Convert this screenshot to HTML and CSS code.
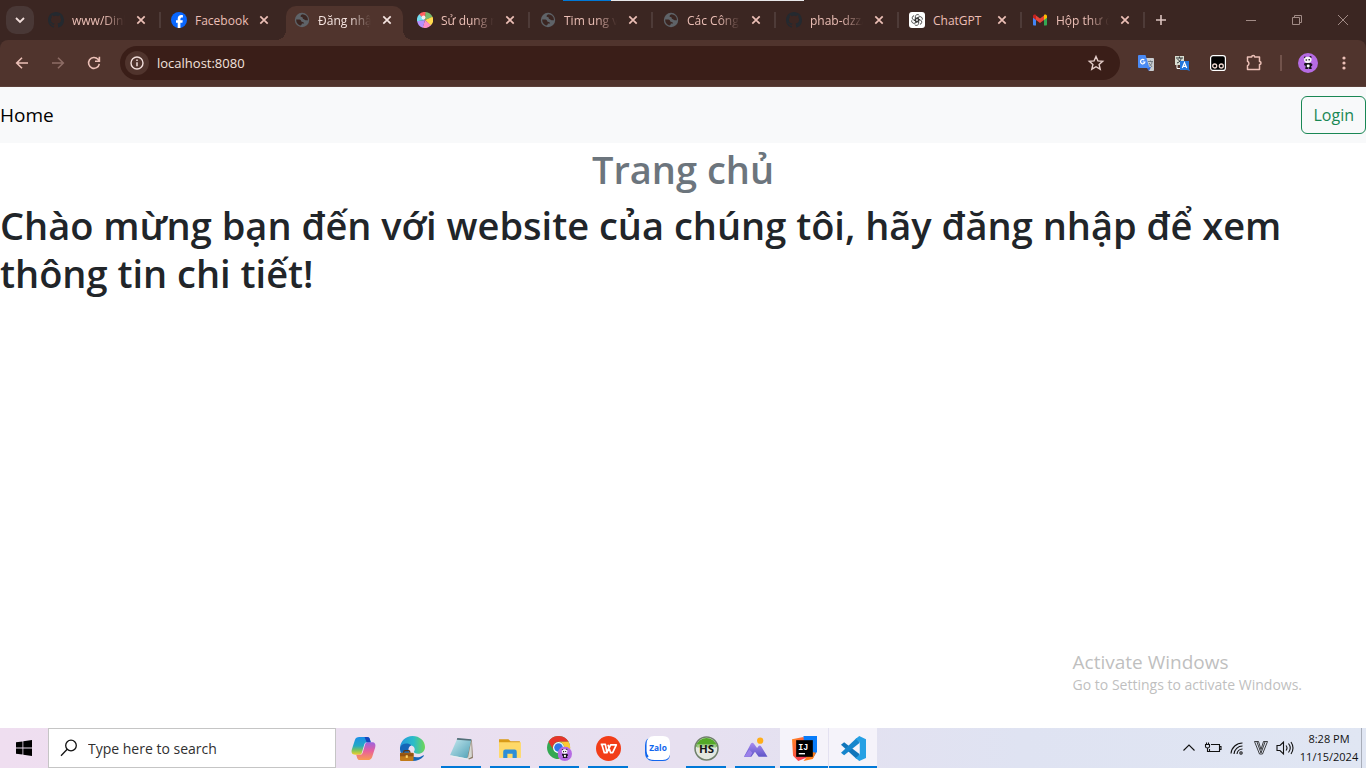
FILE: index.html
```html
<!DOCTYPE html>
<html lang="vi">
<head>
<meta charset="utf-8">
<meta name="viewport" content="width=device-width, initial-scale=1">
<title>Đăng nhập</title>
<link rel="stylesheet" href="styles.css">
</head>
<body>
<svg class="defs" aria-hidden="true">
  <defs>
    <linearGradient id="cop1" x1="0" y1="0" x2="0" y2="1"><stop offset="0" stop-color="#1b8fe8"/><stop offset=".5" stop-color="#24a9c4"/><stop offset=".75" stop-color="#7fc35a"/><stop offset="1" stop-color="#f2cf2b"/></linearGradient>
    <linearGradient id="cop2" x1="0" y1="0" x2="0" y2="1"><stop offset="0" stop-color="#9a63e0"/><stop offset=".5" stop-color="#e8609b"/><stop offset="1" stop-color="#f99a52"/></linearGradient>
    <linearGradient id="edge1" x1="0" y1="0" x2="1" y2="0"><stop offset="0" stop-color="#2398dd"/><stop offset=".55" stop-color="#2cbcc8"/><stop offset="1" stop-color="#6fd655"/></linearGradient>
    <linearGradient id="mtn" x1="0" y1="0" x2="0" y2="1"><stop offset="0" stop-color="#a78af0"/><stop offset="1" stop-color="#5e55c7"/></linearGradient>
    <linearGradient id="note" x1="0" y1="0" x2="1" y2="1"><stop offset="0" stop-color="#c7eaf0"/><stop offset="1" stop-color="#4e9fb5"/></linearGradient>
    <linearGradient id="ijbg" x1="0" y1="0" x2="1" y2="1"><stop offset="0" stop-color="#ff8a1f"/><stop offset="1" stop-color="#fb1f68"/></linearGradient>
  </defs>
  <symbol id="close" viewBox="0 0 16 16"><path d="M4.300 4.300l7.400 7.400M11.700 4.300l-7.400 7.400" fill="none" stroke="currentColor" stroke-width="1.700"/></symbol>
  <symbol id="github" viewBox="0 0 16 16"><path fill="#24292f" d="M8 0C3.58 0 0 3.58 0 8c0 3.54 2.29 6.53 5.47 7.59.4.07.55-.17.55-.38 0-.19-.01-.82-.01-1.49-2.01.37-2.53-.49-2.69-.94-.09-.23-.48-.94-.82-1.13-.28-.15-.68-.52-.01-.53.63-.01 1.08.58 1.23.82.72 1.21 1.87.87 2.33.66.07-.52.28-.87.51-1.07-1.78-.2-3.64-.89-3.64-3.95 0-.87.31-1.59.82-2.15-.08-.2-.36-1.02.08-2.12 0 0 .67-.21 2.2.82.64-.18 1.32-.27 2-.27s1.36.09 2 .27c1.53-1.04 2.2-.82 2.2-.82.44 1.1.16 1.92.08 2.12.51.56.82 1.27.82 2.15 0 3.07-1.87 3.75-3.65 3.95.29.25.54.73.54 1.48 0 1.07-.01 1.93-.01 2.2 0 .21.15.46.55.38A8.01 8.01 0 0 0 16 8c0-4.42-3.58-8-8-8z"/></symbol>
  <symbol id="globe" viewBox="0 0 16 16"><circle cx="8" cy="8" r="7.200" fill="#5f6368"/><path d="M8.500 2.200q-2 .4-2 2 0 .8 1.200.8 1 0 1 1.200.2 1 1.400 1 .6 1 1.700 1h2.200q0-3-2-4.600-1.500-1.300-3.500-1.400zM2.100 7.600h3.400q1.500 0 1.700 1.600.2.800 1.500.8 1.400.2 1.400 1.500h-1.800q-.6 0-.8 1.200-.2.700-1.500.8-3.700-1.300-3.900-5.900z" fill="#3b2622"/></symbol>
  <symbol id="panda" viewBox="0 0 20 20"><circle cx="10" cy="10" r="10" fill="#b66be3"/><path d="M6.500 10h6.500l1.500 1.500-.5 1.500-1 .2.800 2.800h-2.600l-.7-1-.7 1H7.200l.5-3-1.700-1z" fill="#17131b"/><rect x="8.700" y="11.500" width="3" height="3" rx="1.400" fill="#fff"/><circle cx="7" cy="4.500" r="1.100" fill="#17131b"/><circle cx="12.500" cy="4.200" r="1.100" fill="#17131b"/><ellipse cx="9.800" cy="6.800" rx="3.800" ry="3.100" fill="#f8f5f8"/><ellipse cx="8.300" cy="7" rx=".9" ry=".8" fill="#17131b"/><ellipse cx="11.200" cy="6.800" rx=".9" ry=".8" fill="#17131b"/></symbol>
</svg>

<header class="browser">
  <div class="tabstrip">
    <button class="tab-search" aria-label="Search tabs"><svg width="12" height="12" viewBox="0 0 12 12"><path d="M2 4l4 4 4-4" fill="none" stroke="#f1dedb" stroke-width="1.800"/></svg></button>
    <div class="tabs">
      <div class="tab"><svg class="favicon"><use href="#github"/></svg><span class="tab-title">www/Dinh</span><button class="close" aria-label="Close tab"><svg><use href="#close"/></svg></button></div>
      <div class="tab"><svg class="favicon" viewBox="0 0 16 16"><circle cx="8" cy="8" r="8" fill="#0866ff"/><path d="M6.700 16v-5.300H5V8.200h1.700V7.100c0-2.700 1.200-4 3.900-4 .5 0 1 .1 1.300.2v2.200h-.8c-1.200 0-1.700.5-1.700 1.700v1h2.400l-.4 2.500h-2V16z" fill="#fff"/></svg><span class="tab-title whole">Facebook</span><button class="close" aria-label="Close tab"><svg><use href="#close"/></svg></button></div>
      <div class="tab active"><svg class="favicon"><use href="#globe"/></svg><span class="tab-title">Đăng nhậ</span><button class="close" aria-label="Close tab"><svg><use href="#close"/></svg></button></div>
      <div class="tab"><svg class="favicon" viewBox="0 0 16 16"><path d="M8 8L2 2.500A8 8 0 0 1 9 0z" fill="#ff6161"/><path d="M8 8L8.500 0a8 8 0 0 1 7 5z" fill="#77b96d"/><path d="M8 8l7.500-3.300a8 8 0 0 1-1.800 8.900z" fill="#ffd94e"/><path d="M8 8l6 5.300a8 8 0 0 1-8.400 2.300z" fill="#ff8fc4"/><path d="M8 8l-2.200 7.700A8 8 0 0 1 .1 9z" fill="#b690ff"/><path d="M8 8L0 9.300a8 8 0 0 1 2.200-7z" fill="#72dcf0"/><circle cx="6.500" cy="5.500" r="2" fill="#fff" opacity=".85"/></svg><span class="tab-title">Sử dụng n</span><button class="close" aria-label="Close tab"><svg><use href="#close"/></svg></button></div>
      <div class="tab"><svg class="favicon"><use href="#globe"/></svg><span class="tab-title">Tim ung v</span><button class="close" aria-label="Close tab"><svg><use href="#close"/></svg></button></div>
      <div class="tab"><svg class="favicon"><use href="#globe"/></svg><span class="tab-title">Các Công</span><button class="close" aria-label="Close tab"><svg><use href="#close"/></svg></button></div>
      <div class="tab"><svg class="favicon"><use href="#github"/></svg><span class="tab-title">phab-dzz/</span><button class="close" aria-label="Close tab"><svg><use href="#close"/></svg></button></div>
      <div class="tab"><svg class="favicon" viewBox="0 0 16 16"><rect width="16" height="16" rx="3" fill="#fff"/><g fill="none" stroke="#333" stroke-width=".8"><g id="petal"><path d="M6.300 9V4.800a2.300 2.300 0 0 1 4-1.500M6.300 5.500l3.500 2"/></g><use href="#petal" transform="rotate(60 8 8)"/><use href="#petal" transform="rotate(120 8 8)"/><use href="#petal" transform="rotate(180 8 8)"/><use href="#petal" transform="rotate(240 8 8)"/><use href="#petal" transform="rotate(300 8 8)"/></g></svg><span class="tab-title whole">ChatGPT</span><button class="close" aria-label="Close tab"><svg><use href="#close"/></svg></button></div>
      <div class="tab"><svg class="favicon" viewBox="0 0 16 16"><path d="M1 4v8.500c0 .5.500 1 1 1h2V7z" fill="#4285f4"/><path d="M12 7v6.500h2c.6 0 1-.5 1-1V4z" fill="#34a853"/><path d="M4 3.500l4 3 4-3V8l-4 3-4-3z" fill="#ea4335"/><path d="M1 4.300C1 2.600 2.800 2 4 3v5L1 5.800z" fill="#c5221f"/><path d="M15 4.300C15 2.600 13.200 2 12 3v5l3-2.200z" fill="#fbbc04"/></svg><span class="tab-title">Hộp thư đ</span><button class="close" aria-label="Close tab"><svg><use href="#close"/></svg></button></div>
    </div>
    <button class="new-tab" aria-label="New tab"><svg width="12" height="12" viewBox="0 0 12 12"><path d="M6 1v10M1 6h10" stroke="#dcc4c0" stroke-width="1.600"/></svg></button>
    <div class="window-controls">
      <button aria-label="Minimize"><svg width="12" height="12" viewBox="0 0 12 12"><path d="M1 6.500h10"/></svg></button>
      <button aria-label="Restore"><svg width="12" height="12" viewBox="0 0 12 12"><path d="M1.500 3.500h7v7h-7zM3.500 3.500v-2h7v7h-2"/></svg></button>
      <button aria-label="Close window"><svg width="12" height="12" viewBox="0 0 12 12"><path d="M1 1l10 10M11 1L1 11"/></svg></button>
    </div>
    <div class="share-strip"></div>
  </div>
  <div class="toolbar">
    <nav class="history">
      <button aria-label="Back"><svg width="16" height="16" viewBox="0 0 16 16"><path d="M14 8H3M8 2.700L2.700 8 8 13.300" fill="none" stroke="#ecc0b7" stroke-width="1.600"/></svg></button>
      <button aria-label="Forward"><svg width="16" height="16" viewBox="0 0 16 16"><path d="M2 8h11M8 2.700L13.300 8 8 13.300" fill="none" stroke="#8d6c65" stroke-width="1.600"/></svg></button>
      <button aria-label="Reload"><svg width="16" height="16" viewBox="0 0 16 16"><path d="M13.300 8.800A5.400 5.400 0 1 1 12 4.300l1 1.100M13.400 1.800v4.400H9" fill="none" stroke="#ecc0b7" stroke-width="1.600"/></svg></button>
    </nav>
    <div class="omnibox">
      <button class="site-info" aria-label="Site information"><svg width="14" height="14" viewBox="0 0 14 14"><circle cx="7" cy="7" r="6" fill="none" stroke="#f1dedb" stroke-width="1.400"/><path d="M7 6.300v4M7 3.500v1.500" stroke="#f1dedb" stroke-width="1.500"/></svg></button>
      <input class="address" type="text" value="localhost:8080" aria-label="Address">
      <button class="bookmark" aria-label="Bookmark"><svg width="18" height="18" viewBox="0 0 18 18"><path d="M9 2.500l1.900 4.400 4.800.4-3.600 3.200 1.100 4.700L9 12.700l-4.200 2.500 1.100-4.700-3.600-3.200 4.800-.4z" fill="none" stroke="#e5ceca" stroke-width="1.400"/></svg></button>
    </div>
    <div class="extensions">
      <button aria-label="Google Translate"><svg width="16" height="16" viewBox="0 0 16 16"><path d="M6 3h9q1 0 1 1v11q0 1-1 1h-4z" fill="#c9cdd0"/><path d="M8 12h5l-2 4z" fill="#3367d6"/><path d="M1 0h6.500L11.500 13H1q-1 0-1-1V1q0-1 1-1z" fill="#4a8af4"/><path d="M6.300 5.100A2.200 2.200 0 1 0 6.900 7H4.700" fill="none" stroke="#fff" stroke-width="1.200"/><path d="M10 6.500h5M12.500 5.500v1M11 8l3 4M14 7c0 2-1.500 3-2.500 4" fill="none" stroke="#68727a" stroke-width=".9"/></svg></button>
      <button aria-label="Translator"><svg width="16" height="16" viewBox="0 0 16 16"><path d="M1 1h9v9H1z" fill="#d9ded2"/><path d="M2 3h7M5.500 1.500V3M3 8c3-1 4-3 4-5M3.500 4l4 4" stroke="#33383b" fill="none"/><path d="M3 10v3.500h3" stroke="#fff" fill="none"/><path d="M6 6h9v8l1 2-3-1H6z" fill="#2477dc"/><path d="M8.300 13L10.500 7.500l2.200 5.500M9 11.300h3" stroke="#fff" stroke-width="1.200" fill="none"/></svg></button>
      <button aria-label="Tampermonkey"><svg width="16" height="16" viewBox="0 0 16 16"><rect x=".6" y=".6" width="14.800" height="14.800" rx="2.500" fill="#000" stroke="#fff" stroke-width="1.200"/><circle cx="4.700" cy="11" r="2" fill="#000" stroke="#eed6ce" stroke-width="1.300"/><circle cx="11.300" cy="11" r="2" fill="#000" stroke="#eed6ce" stroke-width="1.300"/></svg></button>
      <button aria-label="Extensions"><svg width="18" height="18" viewBox="0 0 18 18"><path d="M2.500 3h4.200a1.500 1.500 0 0 1 3 0H14.500v4.500a1.500 1.500 0 0 1 0 3V15.500H2.500v-3.800a2.400 2.400 0 0 0 0-4.400z" fill="none" stroke="#ecc0b7" stroke-width="1.500" stroke-linejoin="round"/></svg></button>
      <span class="divider"></span>
      <button aria-label="Profile"><svg width="20" height="20"><use href="#panda"/></svg></button>
      <button aria-label="Menu"><svg width="16" height="16" viewBox="0 0 16 16" fill="#ecc0b7"><circle cx="8" cy="3" r="1.600"/><circle cx="8" cy="8" r="1.600"/><circle cx="8" cy="13" r="1.600"/></svg></button>
    </div>
  </div>
</header>

<main class="page">
  <nav class="navbar">
    <a class="brand" href="#">Home</a>
    <button class="login">Login</button>
  </nav>
  <h1 class="title">Trang chủ</h1>
  <h1 class="welcome">Chào mừng bạn đến với website của chúng tôi, hãy đăng nhập để xem thông tin chi tiết!</h1>
  <aside class="watermark">
    <p class="watermark-title">Activate Windows</p>
    <p class="watermark-text">Go to Settings to activate Windows.</p>
  </aside>
</main>

<footer class="taskbar">
  <button class="start" aria-label="Start"><svg width="16" height="16" viewBox="0 0 16 16"><path d="M0 2.300l6.500-.9v6.200H0zM7.300 1.300L16 0v7.600H7.300zM0 8.400h6.500v6.200L0 13.700zM7.300 8.400H16V16l-8.700-1.200z"/></svg></button>
  <label class="search">
    <svg width="18" height="18" viewBox="0 0 18 18"><circle cx="11" cy="6.500" r="5.300" fill="none" stroke="#111" stroke-width="1.300"/><path d="M7.200 10.300L1 16.700" stroke="#111" stroke-width="1.300"/></svg>
    <input type="text" placeholder="Type here to search" aria-label="Search">
  </label>
  <div class="apps">
    <button class="app" aria-label="Copilot"><svg viewBox="0 0 24 24"><path d="M8 1h7.500c1.500 0 2.200.8 2.600 2L19 6h-3.500c-1.500 0-2.300.8-2.700 2l-2.400 8c-.4 1.300-1 2-2.400 2H4c-3 0-4-2-3.200-5L3.600 4.200C4.300 2 5.800 1 8 1z" fill="url(#cop1)"/><path d="M16 23H8.500C7 23 6.300 22.200 5.900 21L5 18h3.500c1.500 0 2.300-.8 2.700-2l2.400-8c.4-1.300 1-2 2.400-2h4c3 0 4 2 3.200 5l-2.800 8.800C19.700 22 18.200 23 16 23z" fill="url(#cop2)"/><path d="M13 1h2.500c1.500 0 2.200.8 2.600 2L19 6h-4z" fill="#1746bd"/></svg></button>
    <button class="app" aria-label="Edge"><svg viewBox="0 0 24 24"><path d="M0 11C.6 4.800 5.400 0 12 0c7 0 12 4.800 12 10.500 0 4-3 6.500-6.600 6.500-2.800 0-4.400-1.200-4-2.200 1.600-2 .6-4.800-2.400-5.800C7.500 7.600 3 8.200 0 11z" fill="url(#edge1)"/><path d="M0 11c1.500-3.800 7.500-5 11-2-2.800.8-3.500 3.800-2.300 6.500 1.600 3.600 5.400 5.500 9.200 4.800 1.800-.3 3-1 4.100-1.700.8-.5 1.200 0 .7.800C20.500 22.400 16.600 24 12 24 5 24-.6 18 0 11z" fill="#1466b8"/><path d="M3.500 16.500v-1q0-1.500 1.500-1.500h3q1.500 0 1.500 1.500v1" fill="none" stroke="#583314" stroke-width="1.200"/><rect x="0" y="16" width="13" height="8" rx="1" fill="#c17a18"/><path d="M0 16.500h13v3H0z" fill="#925310"/><rect x="5.500" y="18.500" width="2" height="2.500" fill="#ffd36a"/></svg></button>
    <button class="app open" aria-label="Notepad"><svg viewBox="0 0 24 24"><path d="M8 2.500L22 4l1 17-4 1.500z" fill="#8a7963"/><path d="M8 2.500L21.500 3 17.500 21.500 1 18.500z" fill="url(#note)"/><path d="M1 18.500l16.500 3L19 23 2 20z" fill="#e8edf0"/><path d="M8 2l13.500 1-.3 1.500L7.500 3.700z" fill="#536e78"/><path d="M21.500 4L18 22l4-2z" fill="#d7d8d3"/></svg></button>
    <button class="app open" aria-label="File Explorer"><svg viewBox="0 0 24 24"><path d="M1 3h9l2 2h9v5H1z" fill="#d99b16"/><path d="M1 6h21v15H1z" fill="#ffd968"/><path d="M5 21v-6q0-2 2-2h9q2 0 2 2v6h-4v-4H9v4z" fill="#2e8ed8"/></svg></button>
    <button class="app open" aria-label="Chrome"><svg viewBox="0 0 26 26"><circle cx="12" cy="12" r="12" fill="#34a853"/><path d="M1.600 6A12 12 0 0 1 22.400 6H12a6 6 0 0 0-5.200 9z" fill="#e6352b"/><path d="M22.400 6A12 12 0 0 1 12 24l5.200-9A6 6 0 0 0 12 6z" fill="#fcc934"/><circle cx="12" cy="12" r="5.700" fill="#fff"/><circle cx="12" cy="12" r="4.500" fill="#3077e8"/><use href="#panda" x="11" y="11" width="15" height="15"/></svg></button>
    <button class="app open" aria-label="WPS Office"><svg viewBox="0 0 24 24"><circle cx="12" cy="12" r="12" fill="#f23d18"/><path d="M4.500 8H9l1.500 8L14 8.500h5.500L16 16h-2L11.500 8.500M5.500 8L8 16h2.500L13 10" fill="none" stroke="#fff" stroke-width="1.600" stroke-linejoin="round"/></svg></button>
    <button class="app" aria-label="Zalo"><svg viewBox="0 0 24 24"><path d="M7 1Q0 2 0 9v7q0 7 7 8h10q6 0 7-5L10 4z" fill="#1266ee"/><path d="M9 0h8q7 0 7 7v9q0 7-7 7H9q-3 0-5-1l-2-1 1.500-1.500q-2-2-2-5V8q0-8 7.500-8z" fill="#fff"/><text x="12.500" y="14" text-anchor="middle" class="zalo">Zalo</text></svg></button>
    <button class="app open" aria-label="HeidiSQL"><svg viewBox="0 0 24 24"><circle cx="12" cy="12" r="11" fill="#e3e8e0" stroke="#70806b" stroke-width="1.500"/><path d="M2 9.500a10.400 10.400 0 0 1 20 0l-1 1.500H3z" fill="#53a927"/><path d="M3 8h18v9H3z" fill="#e3e8e0" opacity=".55"/><text x="12" y="16" text-anchor="middle" class="heidi">HS</text></svg></button>
    <button class="app open" aria-label="Photo app"><svg viewBox="0 0 24 24"><path d="M1 20L7.500 7.500q1.500-2 3 0l3 4 1.500-2q1.500-1 2.800 1L23.500 20H15l-3.500-5L8 20z" fill="url(#mtn)"/><path d="M1 20l5-7 3 3-2 4z" fill="#9b80ea"/><circle cx="16.500" cy="4.500" r="3" fill="#ffae19"/></svg></button>
    <button class="app open current" aria-label="IntelliJ IDEA"><svg viewBox="0 0 24 24"><path d="M0 3l11-2 6 10-1 9-10 4-5-5z" fill="url(#ijbg)"/><path d="M11 0h13v15l-4 6-8-9z" fill="#087cfa"/><path d="M18 15l5 1-3 6-9 2z" fill="#fe7a18"/><path d="M4 4h16v16H4z"/><path d="M6.500 17h6" stroke="#fff" stroke-width="1.300"/><text x="6" y="13" class="idea">IJ</text></svg></button>
    <button class="app open current" aria-label="Visual Studio Code"><svg viewBox="0 0 24 24"><path d="M3 6L0 8.500 15 22l3-4.500z" fill="#1075ba"/><path d="M3 18.500L0 16 15 2l3 4.500z" fill="#1685cc"/><path d="M17.500 0L24 3v18l-6.500 3L14 21.200l4-3.200V6l-4-3.200z" fill="#26a0e4"/></svg></button>
  </div>
  <div class="tray">
    <button aria-label="Show hidden icons"><svg width="16" height="16" viewBox="0 0 16 16"><path d="M2.500 10.500L8 5l5.500 5.500"/></svg></button>
    <button aria-label="Battery"><svg width="18" height="16" viewBox="0 0 18 16"><path d="M7 4.500h8.500v7H5.500V9M15.500 6.500h1.500v3h-1.500M1.500 4.500h4v2q0 1.500-2 1.500t-2-1.500zM2.500 2.500v2M4.500 2.500v2M3.500 8v3.500h2"/></svg></button>
    <button aria-label="Network"><svg width="16" height="16" viewBox="0 0 16 16"><path d="M2 13.500A11.500 11.500 0 0 1 13.500 3M5 14a8.500 8.500 0 0 1 8.500-8M8 14a5.500 5.500 0 0 1 5.500-5"/><circle cx="12" cy="13" r="1.200"/></svg></button>
    <button aria-label="Vietnamese input"><svg width="16" height="16" viewBox="0 0 16 16"><path d="M1.500 1.500h4L8 9.500l2.500-8h4L9.500 14h-3zM4 2l4 11 4-11" stroke-width=".8"/></svg></button>
    <button aria-label="Volume"><svg width="18" height="16" viewBox="0 0 18 16"><path d="M1 5.500h3L7.500 2v12L4 10.500H1zM10 5.500q2 2.500 0 5M12.500 3.500q3.500 4.500 0 9M15 2q4 6 0 12"/></svg></button>
    <time class="clock" datetime="2024-11-15T20:28"><span>8:28 PM</span><span>11/15/2024</span></time>
    <span class="show-desktop"></span>
  </div>
</footer>
</body>
</html>
```
FILE: styles.css
```css
* { box-sizing: border-box; }

body {
  margin: 0;
  min-height: 100vh;
  display: flex;
  flex-direction: column;
  background: #fff;
  font-family: "Open Sans", "Noto Sans", sans-serif;
}

button {
  display: flex;
  align-items: center;
  justify-content: center;
  padding: 0;
  border: 0;
  background: none;
  font: inherit;
  color: inherit;
}

input {
  min-width: 0;
  padding: 0;
  border: 0;
  outline: 0;
  background: none;
  font: inherit;
  color: inherit;
}

.defs { position: absolute; width: 0; height: 0; }

/* Browser frame */
.browser { background: #3b2622; }

.tabstrip {
  position: relative;
  display: flex;
  height: 40px;
  padding: 6px 0 0 6px;
  color: #ecbfb6;
  font-size: 12px;
}

.tab-search {
  flex: none;
  width: 28px;
  height: 28px;
  margin-right: 6px;
  border-radius: 10px;
  background: #493836;
}

.tabs { display: flex; gap: 6px; }

.tab {
  position: relative;
  display: flex;
  align-items: center;
  gap: 8px;
  width: 117px;
  height: 34px;
  padding: 0 8px 6px;
}

.tab:not(.active)::after {
  content: "";
  position: absolute;
  right: -4px;
  top: 6px;
  width: 2px;
  height: 16px;
  background: #4e3b38;
}

.tab:has(+ .active)::after { display: none; }

.tab.active {
  background: #50342d;
  border-radius: 10px 10px 0 0;
  color: #f5e4e0;
}

.tab.active::before,
.tab.active::after {
  content: "";
  position: absolute;
  bottom: 0;
  width: 10px;
  height: 10px;
}

.tab.active::before { left: -10px; background: radial-gradient(circle at 0 0, transparent 10px, #50342d 10px); }
.tab.active::after { right: -10px; background: radial-gradient(circle at 100% 0, transparent 10px, #50342d 10px); }

.favicon { flex: none; width: 16px; height: 16px; }

.tab-title {
  flex: 1;
  min-width: 0;
  white-space: nowrap;
  mask-image: linear-gradient(to right, #000 60%, transparent);
}

.tab-title.whole { mask-image: none; }

.close { flex: none; width: 16px; height: 16px; }
.close svg { width: 16px; height: 16px; }

.new-tab { width: 28px; height: 28px; margin-left: 6px; }

.window-controls {
  display: flex;
  margin-left: auto;
  height: 28px;
}

.window-controls button { width: 46px; }
.window-controls svg { fill: none; stroke: #a18b86; }

.share-strip {
  position: absolute;
  left: 563px;
  top: 0;
  width: 241px;
  height: 1px;
  background: linear-gradient(to right, #0078d7 20%, #e8e8ea 20%);
}

.toolbar {
  display: flex;
  align-items: center;
  gap: 8px;
  padding: 6px 4px;
  border-bottom: 1px solid #5c4039;
  border-radius: 8px 8px 0 0;
  background: #50342d;
}

.history, .extensions { display: flex; align-items: center; }
.history button, .extensions button { width: 36px; height: 34px; }

.omnibox {
  flex: 1;
  display: flex;
  align-items: center;
  height: 34px;
  padding: 0 15px 0 5px;
  border-radius: 17px;
  background: #3a1e18;
  color: #f3e2de;
  font-size: 13px;
}

.site-info { width: 24px; height: 24px; border-radius: 12px; background: #50342d; }
.address { flex: 1; margin-left: 8px; }

.divider { width: 2px; height: 16px; margin: 0 8px; background: #72534b; }

/* Web page */
.page { position: relative; flex: 1; }

.navbar {
  display: flex;
  align-items: center;
  justify-content: space-between;
  height: 56px;
  background: #f8f9fa;
}

.brand { color: #000; font-size: 19px; text-decoration: none; }

.login {
  height: 38px;
  padding: 0 11px;
  border: 1px solid #198754;
  border-radius: 6px;
  color: #198754;
  font-size: 16px;
}

.title, .welcome {
  margin: 0 0 8px;
  color: #212529;
  font-size: 38px;
  font-weight: 600;
  line-height: 48px;
}

.title { padding-top: 2px; color: #6c757d; text-align: center; }

.watermark {
  position: absolute;
  right: 64px;
  bottom: 33px;
  color: #bfbfbf;
}

.watermark p { margin: 0; }
.watermark-title { font-size: 19px; line-height: 26px; }
.watermark-text { font-size: 14px; line-height: 20px; }

/* Taskbar */
.taskbar {
  display: flex;
  height: 40px;
  background: linear-gradient(to right, #efdef0, #e7e0f0 50%, #dfe3f2 75%, #e0e6f3);
}

.start { width: 48px; }

.search {
  display: flex;
  align-items: center;
  gap: 10px;
  width: 288px;
  padding: 0 11px;
  border: 1px solid #c5c5c5;
  background: #fff;
  font-size: 14px;
}

.search input { flex: 1; }
.search input::placeholder { color: #303030; opacity: 1; }

.apps { display: flex; gap: 1px; margin-left: 3px; }

.app { position: relative; width: 48px; }
.app svg { width: 25px; height: 25px; }

.app.open::after {
  content: "";
  position: absolute;
  left: 4px;
  right: 4px;
  bottom: 0;
  height: 2px;
  background: #0078d7;
}

.app.current { background: #f5f3fa; }
.app.current::after { left: 0; right: 0; }

.zalo { fill: #1266ee; font: bold 8px "Open Sans", sans-serif; }
.heidi { fill: #151515; font: bold 11px "Open Sans", sans-serif; }
.idea { fill: #fff; font: bold 8px "Liberation Mono", monospace; }

.tray { display: flex; margin-left: auto; }
.tray button { width: 24px; }
.tray svg { fill: none; stroke: #111; stroke-width: 1.1; }

.clock {
  display: flex;
  flex-direction: column;
  justify-content: center;
  width: 64px;
  color: #111;
  font-size: 11px;
  line-height: 18px;
  text-align: center;
}

.show-desktop { width: 5px; border-left: 1px solid #a8adb9; }
```
